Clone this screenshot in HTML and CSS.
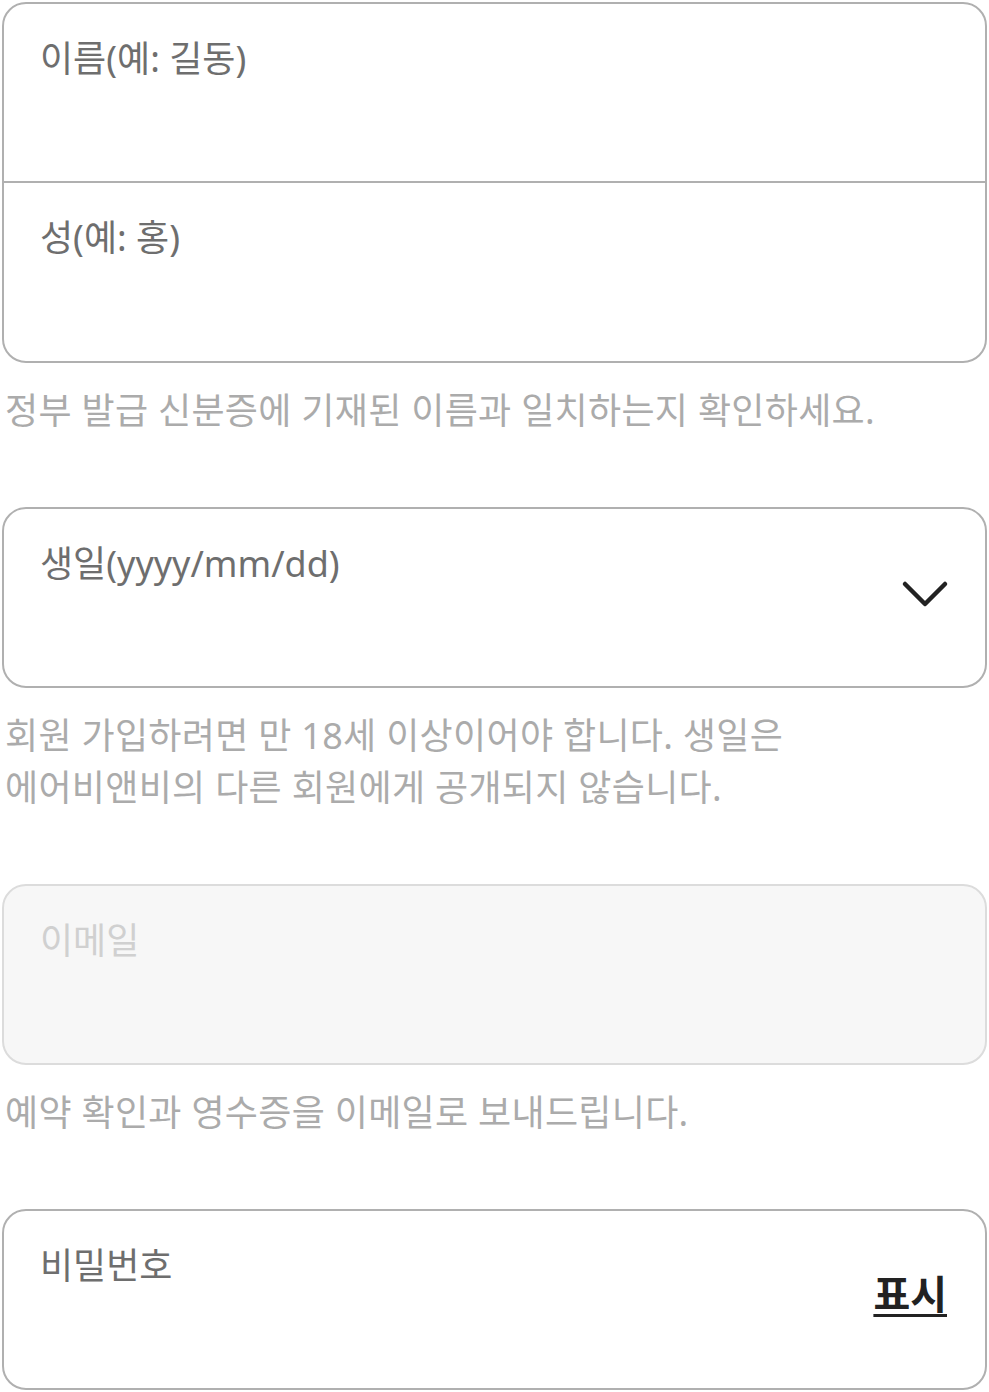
FILE: index.html
```html
<!DOCTYPE html>
<html lang="ko">
<head>
<meta charset="utf-8">
<link rel="stylesheet" href="styles.css">
</head>
<body>
<div class="page">
  <div class="group">
    <div class="box">
      <div class="row"><span class="label">이름(예: 길동)</span></div>
      <div class="row divided"><span class="label">성(예: 홍)</span></div>
    </div>
    <p class="help">정부 발급 신분증에 기재된 이름과 일치하는지 확인하세요.</p>
  </div>
  <div class="group">
    <div class="box">
      <div class="row">
        <span class="label">생일(yyyy/mm/dd)</span>
        <svg class="chevron" width="48" height="32" viewBox="0 0 48 32"><path d="M4 6 L24 26 L44 6" fill="none" stroke="#222" stroke-width="4.5" stroke-linecap="round" stroke-linejoin="round"/></svg>
      </div>
    </div>
    <p class="help">회원 가입하려면 만 18세 이상이어야 합니다. 생일은<br>에어비앤비의 다른 회원에게 공개되지 않습니다.</p>
  </div>
  <div class="group">
    <div class="box disabled">
      <div class="row"><span class="label">이메일</span></div>
    </div>
    <p class="help">예약 확인과 영수증을 이메일로 보내드립니다.</p>
  </div>
  <div class="group">
    <div class="box">
      <div class="row">
        <span class="label">비밀번호</span>
        <span class="show">표시</span>
      </div>
    </div>
  </div>
</div>
</body>
</html>
```
FILE: styles.css
```css
* { box-sizing: border-box; }
html, body { margin: 0; padding: 0; background: #fff; }
body {
  font-family: "Noto Sans", "Noto Sans CJK KR", sans-serif;
  font-size: 36px;
}
.page {
  padding: 2px 2px 0 2px;
  display: flex;
  flex-direction: column;
}
.group { margin-bottom: 70px; }
.group:last-child { margin-bottom: 0; }
.box {
  border: 2px solid #b0b0b0;
  border-radius: 24px;
  overflow: hidden;
}
.box.disabled {
  background: #f7f7f7;
  border-color: #dcdcdc;
}
.row {
  height: 177px;
  padding: 29px 38px 0 36px;
  display: flex;
  align-items: flex-start;
  justify-content: space-between;
}
.row.divided { border-top: 2px solid #b0b0b0; height: 180px; }
.label {
  color: #6e6e6e;
  line-height: 52px;
}
.disabled .label { color: #d0d0d0; }
.chevron { align-self: center; margin-top: -36px; margin-right: -2px; }
.show {
  align-self: center;
  margin-top: -40px;
  font-size: 40px;
  font-weight: 700;
  color: #222;
  text-decoration: underline;
  text-underline-offset: 5px;
  text-decoration-thickness: 3px;
  line-height: 52px;
}
.help {
  margin: 22px 0 0 0;
  padding-left: 3px;
  color: #ababab;
  line-height: 52px;
  letter-spacing: 0.3px;
}
```
